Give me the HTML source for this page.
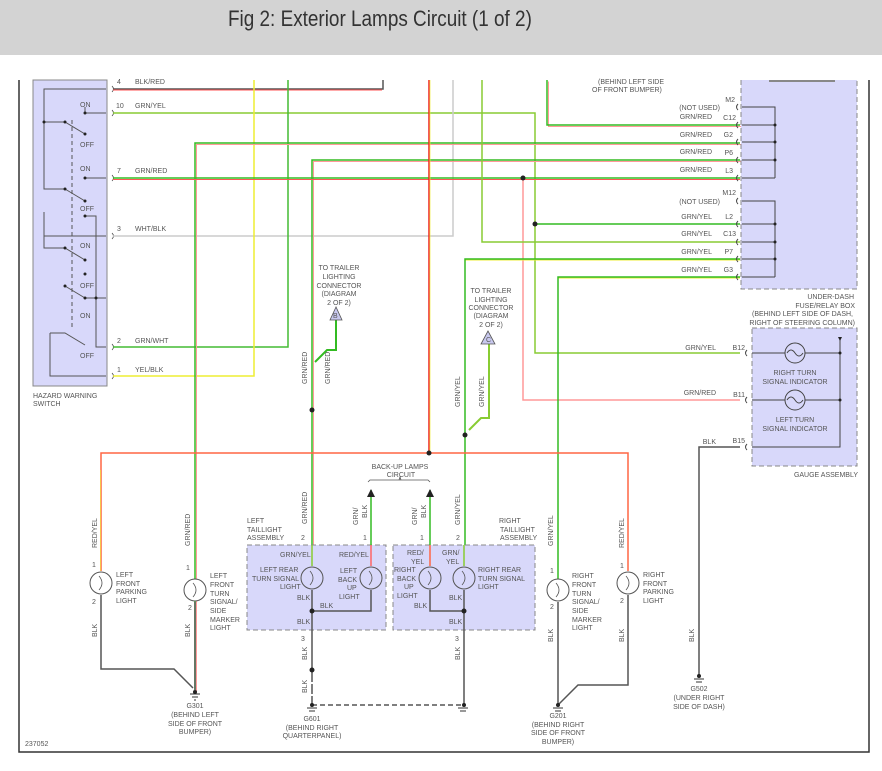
<!DOCTYPE html>
<html><head><meta charset="utf-8"><style>
html,body{margin:0;padding:0;background:#fff;width:882px;height:771px;overflow:hidden}
.hdr{position:absolute;left:0;top:0;width:882px;height:55px;background:#d3d3d3}
.hdr span{position:absolute;left:228px;top:6px;font:22px "Liberation Sans",sans-serif;color:#333;white-space:nowrap;transform:scaleX(0.86);transform-origin:0 0}
svg{position:absolute;left:0;top:0}
text{font-family:"Liberation Sans",sans-serif;font-size:7px;fill:#555}
</style></head><body>
<div class="hdr"><span>Fig 2: Exterior Lamps Circuit (1 of 2)</span></div>
<svg width="882" height="771" viewBox="0 0 882 771">
<path d="M19 80V752H869V80" fill="none" stroke="#333" stroke-width="1.5"/>
<rect x="33" y="80" width="74" height="306" fill="#d8d8fa" stroke="#888"/>
<g stroke="#555" fill="none" stroke-width="1">
<path d="M44 122V89H106M44 122V189H65M44 122H65l20 12M85 107V113H106M85 178H106M65 189l20 12"/>
<path d="M44 212V236H106M44 212V248H65l20 12M85 216H96V347H106M65 286l20 12M85 298H106"/>
<path d="M50 333H65l20 12M50 333V376H106"/>
<path d="M72 120V330" stroke-dasharray="4,3"/>
</g>
<g fill="#222"><circle cx="44" cy="122" r="1.5"/><circle cx="65" cy="122" r="1.5"/><circle cx="85" cy="113" r="1.5"/><circle cx="85" cy="134" r="1.5"/><circle cx="65" cy="189" r="1.5"/><circle cx="85" cy="178" r="1.5"/><circle cx="85" cy="201" r="1.5"/><circle cx="65" cy="248" r="1.5"/><circle cx="85" cy="216" r="1.5"/><circle cx="85" cy="260" r="1.5"/><circle cx="85" cy="274" r="1.5"/><circle cx="65" cy="286" r="1.5"/><circle cx="85" cy="298" r="1.5"/><circle cx="96" cy="298" r="1.5"/></g>
<text x="80" y="107">ON</text><text x="80" y="147">OFF</text><text x="80" y="171">ON</text><text x="80" y="211">OFF</text><text x="80" y="248">ON</text><text x="80" y="288">OFF</text><text x="80" y="318">ON</text><text x="80" y="358">OFF</text>
<text x="33" y="398">HAZARD WARNING</text><text x="33" y="406">SWITCH</text>
<text x="117" y="84">4</text><text x="135" y="84">BLK/RED</text>
<text x="116" y="108">10</text><text x="135" y="108">GRN/YEL</text>
<text x="117" y="173">7</text><text x="135" y="173">GRN/RED</text>
<text x="117" y="231">3</text><text x="135" y="231">WHT/BLK</text>
<text x="117" y="343">2</text><text x="135" y="343">GRN/WHT</text>
<text x="117" y="372">1</text><text x="135" y="372">YEL/BLK</text>
<g fill="none" stroke="#444" stroke-width="0.8"><path d="M112 86q3 3 0 6M112 110q3 3 0 6M112 175q3 3 0 6M112 233q3 3 0 6M112 344q3 3 0 6M112 373q3 3 0 6"/></g>
<g fill="none" stroke-width="1.5">
<path d="M113 89H383V80" stroke="#555"/><path d="M113 90H382" stroke="#f55" stroke-width="1"/>
<path d="M113 113H535V353H740" stroke="#8c3"/>
<path d="M113 236H453V80" stroke="#ccc"/>
<path d="M113 347H288V80" stroke="#4b3"/>
<path d="M113 376H254V80" stroke="#ee3"/>
<path d="M195 690V143H740" stroke="#f99" transform="translate(1.5,1.5)" stroke-width="1"/><path d="M195 690V143H740" stroke="#3b2"/>
<path d="M312 545V160H740" stroke="#f99" transform="translate(1.5,1.5)" stroke-width="1"/><path d="M312 545V160H740" stroke="#3b2"/>
<path d="M113 178H740" stroke="#f55" transform="translate(0,1.5)" stroke-width="1"/><path d="M113 178H740" stroke="#3b2"/>
<path d="M523 178V400H740" stroke="#f99" stroke-width="1.5"/>
<path d="M547 80V125H740" stroke="#f99" transform="translate(1.5,1.5)" stroke-width="1"/><path d="M547 80V125H740" stroke="#3b2"/>
<path d="M482 80V242H740" stroke="#8c3"/>
<path d="M535 224H740" stroke="#3b2"/>
<path d="M465 545V259H740" stroke="#ee3" transform="translate(0,1)" stroke-width="1"/><path d="M465 545V259H740" stroke="#3b2"/>
<path d="M558 590V277H740" stroke="#ee3" transform="translate(0,1)" stroke-width="1"/><path d="M558 590V277H740" stroke="#3b2"/>
<path d="M429 80V453" stroke="#e22"/><path d="M429 80V453" stroke="#ee3" stroke-width="0.7" transform="translate(1,0)"/>
<path d="M101 571V453H628V571" stroke="#f64"/>
<path d="M101 571V470" stroke="#ee3" stroke-width="0.6" transform="translate(-0.5,0)"/>
<path d="M699 676V447H740" stroke="#555"/>
<path d="M336 318V350H327l-12 12" stroke="#3b2" stroke-width="2"/>
<path d="M489 338V418H481l-12 12" stroke="#8c3" stroke-width="2"/>
</g>
<g fill="#222"><circle cx="523" cy="178" r="2.5"/><circle cx="535" cy="224" r="2.5"/><circle cx="429" cy="453" r="2.5"/><circle cx="312" cy="410" r="2.5"/><circle cx="465" cy="435" r="2.5"/></g>
<text x="598" y="84">(BEHIND LEFT SIDE</text><text x="592" y="92">OF FRONT BUMPER)</text>
<g text-anchor="middle"><text x="339" y="270">TO TRAILER</text><text x="339" y="279">LIGHTING</text><text x="339" y="288">CONNECTOR</text><text x="339" y="296">(DIAGRAM</text><text x="339" y="305">2 OF 2)</text>
<text x="491" y="293">TO TRAILER</text><text x="491" y="302">LIGHTING</text><text x="491" y="310">CONNECTOR</text><text x="491" y="318">(DIAGRAM</text><text x="491" y="327">2 OF 2)</text></g>
<path d="M336 307L330 320H342Z" fill="#c8c8ee" stroke="#555" stroke-width=".8"/><text x="333" y="318">B</text>
<path d="M488 331L481 344H495Z" fill="#c8c8ee" stroke="#555" stroke-width=".8"/><text x="486" y="342">C</text>
<text transform="translate(307,384) rotate(-90)">GRN/RED</text><text transform="translate(330,384) rotate(-90)">GRN/RED</text>
<text transform="translate(460,407) rotate(-90)">GRN/YEL</text><text transform="translate(484,407) rotate(-90)">GRN/YEL</text>
<path d="M741 80V289H857V80" fill="#d8d8fa" stroke="#888" stroke-dasharray="5,3"/>
<rect x="769" y="80" width="66" height="2" fill="#888"/>
<g fill="none" stroke="#444" stroke-width="1"><path d="M742 107H775V178M742 125H775M742 142H775M742 160H775M742 178H775M742 201H775V277M742 224H775M742 242H775M742 259H775M742 277H775"/>
<path d="M738 104q-3 3 0 6M738 122q-3 3 0 6M738 139q-3 3 0 6M738 157q-3 3 0 6M738 175q-3 3 0 6M738 198q-3 3 0 6M738 221q-3 3 0 6M738 239q-3 3 0 6M738 256q-3 3 0 6M738 274q-3 3 0 6"/></g>
<g fill="#222"><circle cx="775" cy="125" r="1.5"/><circle cx="775" cy="142" r="1.5"/><circle cx="775" cy="160" r="1.5"/><circle cx="775" cy="224" r="1.5"/><circle cx="775" cy="242" r="1.5"/><circle cx="775" cy="259" r="1.5"/></g>
<g text-anchor="end"><text x="735" y="102">M2</text><text x="736" y="120">C12</text><text x="733" y="137">G2</text><text x="733" y="155">P6</text><text x="733" y="173">L3</text><text x="736" y="195">M12</text><text x="733" y="219">L2</text><text x="736" y="236">C13</text><text x="733" y="254">P7</text><text x="733" y="272">G3</text>
<text x="720" y="110">(NOT USED)</text><text x="712" y="119">GRN/RED</text><text x="712" y="137">GRN/RED</text><text x="712" y="154">GRN/RED</text><text x="712" y="172">GRN/RED</text><text x="720" y="204">(NOT USED)</text><text x="712" y="219">GRN/YEL</text><text x="712" y="236">GRN/YEL</text><text x="712" y="254">GRN/YEL</text><text x="712" y="272">GRN/YEL</text>
<text x="854" y="299">UNDER-DASH</text><text x="855" y="308">FUSE/RELAY BOX</text><text x="853" y="316">(BEHIND LEFT SIDE OF DASH,</text><text x="855" y="325">RIGHT OF STEERING COLUMN)</text>
<text x="716" y="350">GRN/YEL</text><text x="745" y="350">B12</text><text x="716" y="395">GRN/RED</text><text x="745" y="397">B11</text><text x="716" y="444">BLK</text><text x="745" y="443">B15</text>
<text x="858" y="477">GAUGE ASSEMBLY</text></g>
<rect x="752" y="328" width="105" height="138" fill="#d8d8fa" stroke="#888" stroke-dasharray="5,3"/>
<g fill="none" stroke="#444"><path d="M752 353H840M752 400H840M752 447H840V338"/><path d="M747 350q-3 3 0 6M747 397q-3 3 0 6M747 444q-3 3 0 6"/>
<circle cx="795" cy="353" r="10" fill="#d8d8fa"/><circle cx="795" cy="400" r="10" fill="#d8d8fa"/><path d="M787 353q4-6 8 0q4 6 8 0M787 400q4-6 8 0q4 6 8 0"/></g>
<g fill="#222"><circle cx="840" cy="353" r="1.5"/><circle cx="840" cy="400" r="1.5"/><path d="M838 337h4l-2 4z"/></g>
<g text-anchor="middle"><text x="795" y="375">RIGHT TURN</text><text x="795" y="384">SIGNAL INDICATOR</text><text x="795" y="422">LEFT TURN</text><text x="795" y="431">SIGNAL INDICATOR</text></g>
<rect x="247" y="545" width="139" height="85" fill="#d8d8fa" stroke="#888" stroke-dasharray="5,3"/>
<rect x="393" y="545" width="142" height="85" fill="#d8d8fa" stroke="#888" stroke-dasharray="5,3"/>
<g fill="none" stroke-width="1.5">
<path d="M312 545V566" stroke="#8c3"/><path d="M371 545V566" stroke="#f66"/><path d="M430 545V566" stroke="#f64"/><path d="M464 545V566" stroke="#8c3"/>
<path d="M371 545V490" stroke="#3b2"/><path d="M430 545V490" stroke="#3b2"/>
<path d="M312 590V705M371 590V611H312M430 590V611H464M464 590V705M101 595V669H174l19 19M195 602V690M558 602V705l20-20H628V595" stroke="#555"/>
<path d="M312 705H464" stroke="#555" stroke-dasharray="5,3"/>
</g>
<path d="M312 670V705" stroke="#fff" stroke-width="2" stroke-dasharray="2,10"/>
<g fill="#222"><path d="M367 497l4-8 4 8zM426 497l4-8 4 8z"/><circle cx="312" cy="611" r="2.5"/><circle cx="464" cy="611" r="2.5"/><circle cx="312" cy="670" r="2.5"/></g>
<path d="M368 482l2-2h58l2 2M399 480l1-3 1 3" fill="none" stroke="#555" stroke-width=".8"/>
<g text-anchor="middle"><text x="400" y="469">BACK-UP LAMPS</text><text x="401" y="477">CIRCUIT</text></g>
<g fill="#fff" stroke="#555" stroke-width="1"><circle cx="101" cy="583" r="11"/><circle cx="195" cy="590" r="11"/><circle cx="558" cy="590" r="11"/><circle cx="628" cy="583" r="11"/></g>
<g fill="#d8d8fa" stroke="#555" stroke-width="1"><circle cx="312" cy="578" r="11"/><circle cx="371" cy="578" r="11"/><circle cx="430" cy="578" r="11"/><circle cx="464" cy="578" r="11"/></g>
<g fill="none" stroke="#555" stroke-width=".8"><path d="M99 576q6 7 0 14M193 583q6 7 0 14M556 583q6 7 0 14M626 576q6 7 0 14M310 571q6 7 0 14M369 571q6 7 0 14M428 571q6 7 0 14M462 571q6 7 0 14"/></g>
<g stroke="#333" stroke-width="1"><path d="M190 694h10M192 697h6M194 700h2M307 708h10M309 711h6M458 708h10M460 711h6M553 708h10M555 711h6M694 679h10M696 682h6"/></g>
<g fill="#222"><circle cx="195" cy="692" r="2"/><circle cx="312" cy="705" r="2"/><circle cx="464" cy="705" r="2"/><circle cx="558" cy="705" r="2"/><circle cx="699" cy="676" r="2"/></g>
<text x="92" y="567">1</text><text x="92" y="604">2</text><text x="186" y="570">1</text><text x="188" y="610">2</text>
<text x="301" y="540">2</text><text x="363" y="540">1</text><text x="420" y="540">1</text><text x="456" y="540">2</text>
<text x="301" y="641">3</text><text x="455" y="641">3</text><text x="550" y="573">1</text><text x="550" y="609">2</text><text x="620" y="568">1</text><text x="620" y="603">2</text>
<text transform="translate(97,548) rotate(-90)">RED/YEL</text><text transform="translate(190,546) rotate(-90)">GRN/RED</text>
<text transform="translate(307,524) rotate(-90)">GRN/RED</text><text transform="translate(358,525) rotate(-90)">GRN/</text><text transform="translate(367,518) rotate(-90)">BLK</text>
<text transform="translate(417,525) rotate(-90)">GRN/</text><text transform="translate(426,518) rotate(-90)">BLK</text><text transform="translate(460,525) rotate(-90)">GRN/YEL</text>
<text transform="translate(553,546) rotate(-90)">GRN/YEL</text><text transform="translate(624,548) rotate(-90)">RED/YEL</text>
<text transform="translate(97,637) rotate(-90)">BLK</text><text transform="translate(190,637) rotate(-90)">BLK</text><text transform="translate(307,660) rotate(-90)">BLK</text><text transform="translate(307,693) rotate(-90)">BLK</text>
<text transform="translate(460,660) rotate(-90)">BLK</text><text transform="translate(553,642) rotate(-90)">BLK</text><text transform="translate(624,642) rotate(-90)">BLK</text><text transform="translate(694,642) rotate(-90)">BLK</text>
<text x="116" y="577">LEFT</text><text x="116" y="586">FRONT</text><text x="116" y="594">PARKING</text><text x="116" y="603">LIGHT</text>
<text x="210" y="578">LEFT</text><text x="210" y="587">FRONT</text><text x="210" y="596">TURN</text><text x="210" y="604">SIGNAL/</text><text x="210" y="613">SIDE</text><text x="210" y="622">MARKER</text><text x="210" y="630">LIGHT</text>
<text x="247" y="523">LEFT</text><text x="247" y="532">TAILLIGHT</text><text x="247" y="540">ASSEMBLY</text>
<text x="280" y="557">GRN/YEL</text><text x="339" y="557">RED/YEL</text>
<text x="260" y="572">LEFT REAR</text><text x="252" y="581">TURN SIGNAL</text><text x="280" y="589">LIGHT</text><text x="297" y="600">BLK</text><text x="320" y="608">BLK</text><text x="297" y="624">BLK</text>
<text x="340" y="573">LEFT</text><text x="338" y="582">BACK</text><text x="347" y="590">UP</text><text x="339" y="599">LIGHT</text>
<text x="407" y="555">RED/</text><text x="411" y="564">YEL</text><text x="394" y="572">RIGHT</text><text x="397" y="581">BACK</text><text x="404" y="589">UP</text><text x="397" y="598">LIGHT</text><text x="414" y="608">BLK</text>
<text x="442" y="555">GRN/</text><text x="446" y="564">YEL</text><text x="449" y="600">BLK</text><text x="449" y="624">BLK</text>
<text x="478" y="572">RIGHT REAR</text><text x="478" y="581">TURN SIGNAL</text><text x="478" y="589">LIGHT</text>
<text x="499" y="523">RIGHT</text><text x="500" y="532">TAILLIGHT</text><text x="500" y="540">ASSEMBLY</text>
<text x="572" y="578">RIGHT</text><text x="572" y="587">FRONT</text><text x="572" y="596">TURN</text><text x="572" y="604">SIGNAL/</text><text x="572" y="613">SIDE</text><text x="572" y="622">MARKER</text><text x="572" y="630">LIGHT</text>
<text x="643" y="577">RIGHT</text><text x="643" y="586">FRONT</text><text x="643" y="594">PARKING</text><text x="643" y="603">LIGHT</text>
<g text-anchor="middle"><text x="195" y="708">G301</text><text x="195" y="717">(BEHIND LEFT</text><text x="195" y="726">SIDE OF FRONT</text><text x="195" y="734">BUMPER)</text>
<text x="312" y="721">G601</text><text x="312" y="730">(BEHIND RIGHT</text><text x="312" y="738">QUARTERPANEL)</text>
<text x="558" y="718">G201</text><text x="558" y="727">(BEHIND RIGHT</text><text x="558" y="735">SIDE OF FRONT</text><text x="558" y="744">BUMPER)</text>
<text x="699" y="691">G502</text><text x="699" y="700">(UNDER RIGHT</text><text x="699" y="709">SIDE OF DASH)</text></g>
<text x="25" y="746">237052</text>
</svg>
</body></html>
